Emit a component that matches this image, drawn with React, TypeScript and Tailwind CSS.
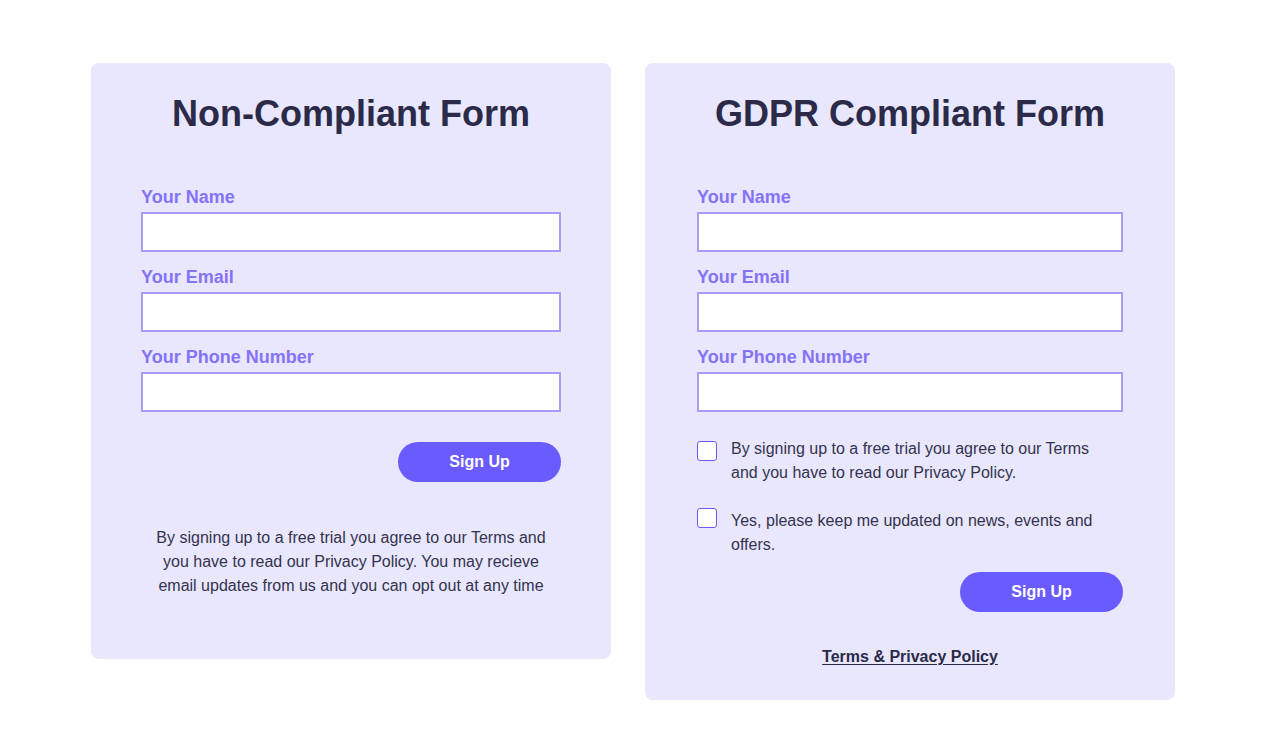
const labelCls = "block text-[18px] leading-6 font-bold text-[#8573f6] mb-[3px]";
const inputCls =
  "block w-full h-10 bg-white border-2 border-[#a99bf7] outline-none px-3 text-base text-[#2b2a48]";
const buttonCls =
  "w-[163px] h-10 rounded-full bg-[#6a5bff] text-white text-base font-bold leading-10";

const fields = ["Your Name", "Your Email", "Your Phone Number"];

function Fields() {
  return (
    <div className="flex flex-col gap-[13px]">
      {fields.map((f) => (
        <label key={f} className="block">
          <span className={labelCls}>{f}</span>
          <input type="text" className={inputCls} />
        </label>
      ))}
    </div>
  );
}

function CheckRow({ text, offset }: { text: string; offset: string }) {
  return (
    <label className="flex items-start gap-[14px]">
      <span
        className={`${offset} w-5 h-5 shrink-0 rounded-[3px] border-[1.5px] border-[#6a5bff] bg-white`}
      />
      <span className="max-w-[372px] text-base leading-6 text-[#34334f]">{text}</span>
    </label>
  );
}

export default function App() {
  return (
    <main
      className="min-h-screen bg-white flex justify-center items-start gap-[34px] pt-[63px]"
      style={{ fontFamily: '"Liberation Sans", Arial, sans-serif' }}
    >
      {/* Non-compliant */}
      <section className="w-[520px] bg-[#e8e7fd] rounded-lg px-[50px] pt-[31px] pb-[61px]">
        <h1 className="text-center text-[36px] leading-10 font-bold text-[#2b2a48] mb-[51px]">
          Non-Compliant Form
        </h1>
        <Fields />
        <div className="flex justify-end mt-[30px]">
          <button className={buttonCls}>Sign Up</button>
        </div>
        <p className="mt-[44px] px-[10px] text-center text-base leading-6 text-[#34334f]">
          By signing up to a free trial you agree to our Terms and you have to
          read our Privacy Policy. You may recieve email updates from us and
          you can opt out at any time
        </p>
      </section>

      {/* GDPR compliant */}
      <section className="w-[530px] bg-[#e8e7fd] rounded-lg px-[52px] pt-[31px] pb-[31px]">
        <h1 className="text-center text-[36px] leading-10 font-bold text-[#2b2a48] mb-[51px]">
          GDPR Compliant Form
        </h1>
        <Fields />
        <div className="flex flex-col gap-[24px] mt-[25px]">
          <CheckRow
            offset="mt-1"
            text="By signing up to a free trial you agree to our Terms and you have to read our Privacy Policy."
          />
          <CheckRow
            offset="-mt-px"
            text="Yes, please keep me updated on news, events and offers."
          />
        </div>
        <div className="flex justify-end mt-[15px]">
          <button className={buttonCls}>Sign Up</button>
        </div>
        <div className="text-center mt-[33px]">
          <a
            href="#"
            className="text-base leading-6 font-bold text-[#2b2a48] underline underline-offset-2"
          >
            Terms &amp; Privacy Policy
          </a>
        </div>
      </section>
    </main>
  );
}
